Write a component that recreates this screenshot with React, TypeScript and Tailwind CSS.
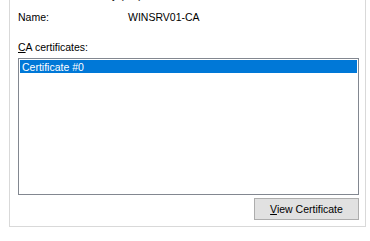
import React from "react";

export default function App() {
  return (
    <div className="w-[370px] h-[241px] bg-white text-black text-[10.5px] leading-[14px] font-['Liberation_Sans','Arial',sans-serif] overflow-hidden">
      <div className="ml-[9px] w-[357px] h-[227px] border-x border-b border-[#d9d9d9] bg-white overflow-hidden flex flex-col pl-[8px] pr-[6px]">
        <div className="-mt-[12px] h-[14px] whitespace-nowrap">Certification Authority (CA)</div>
        <div className="mt-[8px] h-[14px] flex whitespace-nowrap">
          <span className="w-[110px]">Name:</span>
          <span>WINSRV01-CA</span>
        </div>
        <div className="mt-[16px] h-[14px] whitespace-nowrap">
          <span className="underline underline-offset-[1px]">C</span>A certificates:
        </div>
        <div className="mt-[4px] w-[341px] h-[137px] border border-[#828790] bg-white p-[1px]">
          <div className="h-[13px] bg-[#0078d7] text-white pl-[2px] pt-[1px] leading-[12px] whitespace-nowrap">
            Certificate #0
          </div>
        </div>
        <div className="mt-[3px] flex justify-end w-[341px]">
          <button className="w-[105px] h-[22px] border border-[#adadad] bg-[#e1e1e1] flex items-center justify-center leading-[14px] whitespace-nowrap">
            <span>
              <span className="underline underline-offset-[1px]">V</span>iew Certificate
            </span>
          </button>
        </div>
      </div>
    </div>
  );
}
